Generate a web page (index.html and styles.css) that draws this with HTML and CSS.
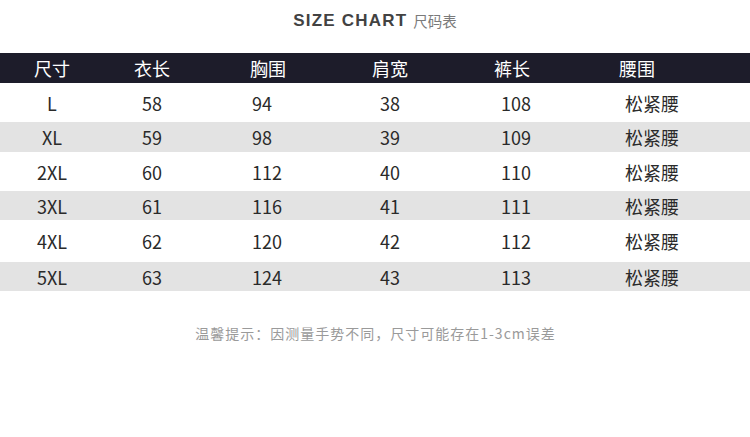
FILE: index.html
```html
<!DOCTYPE html>
<html lang="zh">
<head>
<meta charset="utf-8">
<title>SIZE CHART</title>
<link rel="stylesheet" href="styles.css">
</head>
<body>
<div class="page">
  <div class="title"><span class="en">SIZE CHART</span><span class="cn">尺码表</span></div>
  <div class="table">
    <div class="row head">
      <div class="c c1">尺寸</div><div class="c c2">衣长</div><div class="c c3">胸围</div><div class="c c4">肩宽</div><div class="c c5">裤长</div><div class="c c6">腰围</div>
    </div>
    <div class="row white">
      <div class="c c1">L</div><div class="c c2">58</div><div class="c c3">94</div><div class="c c4">38</div><div class="c c5">108</div><div class="c c6">松紧腰</div>
    </div>
    <div class="row gray">
      <div class="c c1">XL</div><div class="c c2">59</div><div class="c c3">98</div><div class="c c4">39</div><div class="c c5">109</div><div class="c c6">松紧腰</div>
    </div>
    <div class="row white">
      <div class="c c1">2XL</div><div class="c c2">60</div><div class="c c3">112</div><div class="c c4">40</div><div class="c c5">110</div><div class="c c6">松紧腰</div>
    </div>
    <div class="row gray short">
      <div class="c c1">3XL</div><div class="c c2">61</div><div class="c c3">116</div><div class="c c4">41</div><div class="c c5">111</div><div class="c c6">松紧腰</div>
    </div>
    <div class="row white tall">
      <div class="c c1">4XL</div><div class="c c2">62</div><div class="c c3">120</div><div class="c c4">42</div><div class="c c5">112</div><div class="c c6">松紧腰</div>
    </div>
    <div class="row gray short">
      <div class="c c1">5XL</div><div class="c c2">63</div><div class="c c3">124</div><div class="c c4">43</div><div class="c c5">113</div><div class="c c6">松紧腰</div>
    </div>
  </div>
  <div class="note">温馨提示：因测量手势不同，尺寸可能存在1-3cm误差</div>
</div>
</body>
</html>
```

FILE: styles.css
```css
html, body {
  margin: 0;
  padding: 0;
  background: #ffffff;
}
.page {
  width: 750px;
  height: 437px;
  font-family: "Noto Sans CJK SC", "Noto Sans", sans-serif;
  color: #2a2a2a;
}
.title {
  height: 53px;
  display: flex;
  justify-content: center;
  align-items: flex-start;
  padding-top: 10px;
  box-sizing: border-box;
  gap: 6px;
}
.title .en {
  font-family: "Liberation Sans", Arial, sans-serif;
  font-weight: bold;
  font-size: 17px;
  letter-spacing: 1.2px;
  color: #424242;
  line-height: 22px;
}
.title .cn {
  font-size: 14.5px;
  color: #7a7a7a;
  line-height: 22px;
}
.row {
  display: grid;
  grid-template-columns: 104px 96px 130px 120px 125px 175px;
  align-items: center;
  font-size: 18px;
  line-height: 20px;
}
.row.head {
  height: 30px;
  background: #1d1c2a;
  color: #ffffff;
}
.row.white {
  height: 39px;
  background: #ffffff;
}
.row.white.tall {
  height: 42px;
}
.row.gray {
  height: 30px;
  background: #e3e3e3;
}
.row.gray.short {
  height: 29px;
}
.c1, .c2, .c4 {
  text-align: center;
}
.c3, .c5, .c6 {
  text-align: left;
}
.c3 { padding-left: 52px; }
.c5 { padding-left: 51px; }
.c6 { padding-left: 50px; }
.head .c3 { padding-left: 50px; }
.head .c5 { padding-left: 44px; }
.head .c6 { padding-left: 44px; }
.note {
  margin-top: 32px;
  text-align: center;
  font-size: 14px;
  letter-spacing: 1px;
  color: #9a9a9a;
  line-height: 20px;
  padding-left: 1px;
}
```
